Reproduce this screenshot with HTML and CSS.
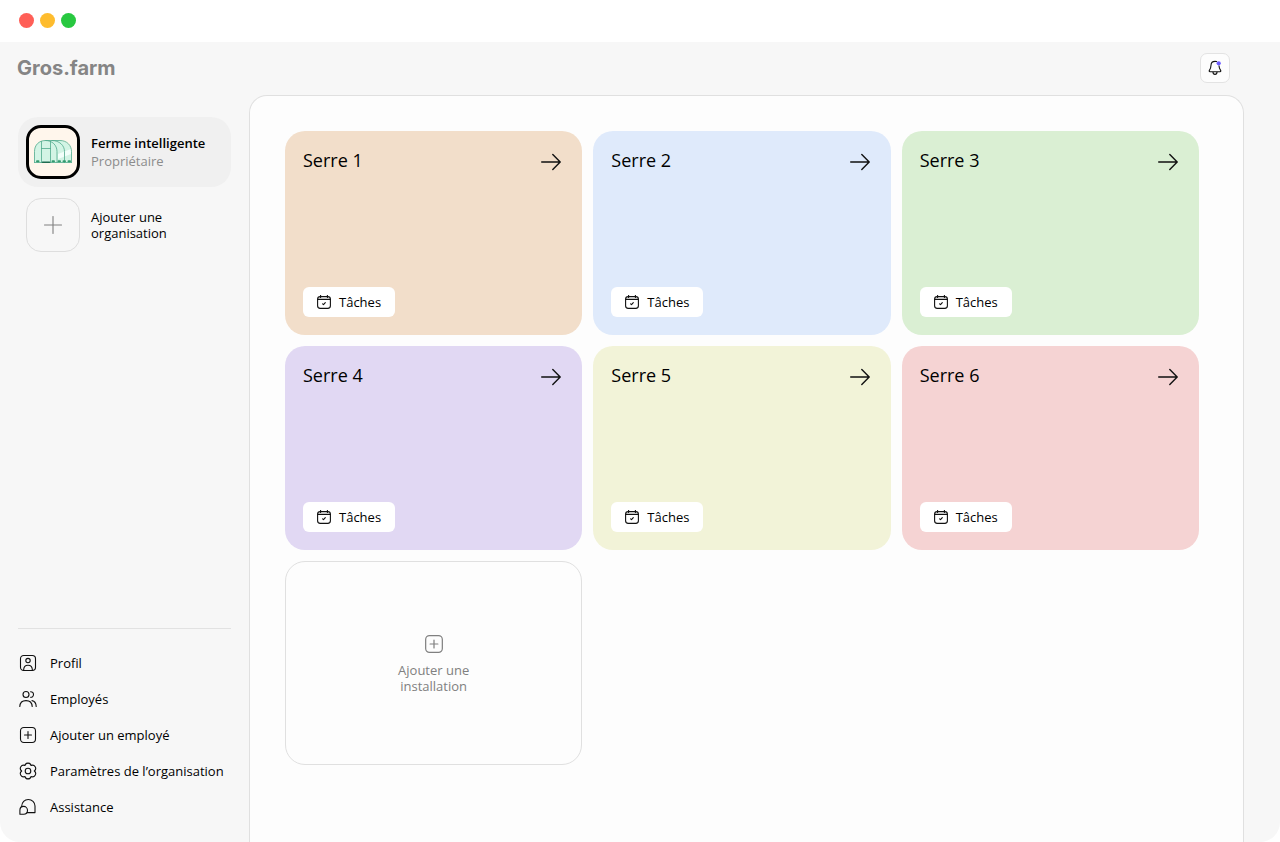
FILE: index.html
```html
<!DOCTYPE html>
<html lang="fr">
<head>
    <meta charset="UTF-8">
    <meta name="viewport" content="width=device-width, initial-scale=1.0">
    <title>Gros.farm - Ferme intelligente</title>
    <link rel="stylesheet" href="styles.css">
</head>
<body>

<!-- Icônes partagées -->
<svg class="sprite" aria-hidden="true">
    <symbol id="icon-arrow" viewBox="0 0 20 18">
        <path d="M0.7 9H19M11.8 1.5L19.2 9L11.8 16.5"/>
    </symbol>
    <symbol id="icon-calendar" viewBox="0 0 14 14">
        <rect x="0.6" y="1.6" width="12.8" height="11.8" rx="2.6"/>
        <path d="M0.6 4.4H13.4M3.6 0.3V2.4M10.4 0.3V2.4M5.6 8.9L6.5 9.6L8.3 7.6"/>
    </symbol>
    <symbol id="icon-plus-box" viewBox="0 0 18 18">
        <rect x="1.5" y="1.5" width="15" height="15" rx="3.4"/>
        <path d="M9 5.5V12.5M5.5 9H12.5"/>
    </symbol>
</svg>

<div class="titlebar">
    <span class="dot red"></span>
    <span class="dot yellow"></span>
    <span class="dot green"></span>
</div>

<div class="app">
    <header class="topbar">
        <a href="#" class="logo">Gros.farm</a>
        <button type="button" class="bell" aria-label="Notifications">
            <svg width="14" height="16" viewBox="0 0 14 16">
                <path d="M8.6 1.6C8.1 1.4 7.6 1.4 7 1.4C4.6 1.4 3.1 3.1 3 5.2C2.9 7.7 2.6 8.8 1.4 10.4C0.9 11.2 1.2 11.7 2 11.7H12C12.8 11.7 13.1 11.2 12.6 10.4C11.5 8.9 11.1 7.9 11 5.8M4.9 11.9C5 13.5 5.9 14.4 7 14.4C8.1 14.4 9 13.5 9.1 11.9"/>
                <circle cx="10.7" cy="3.3" r="2.1" class="badge"/>
            </svg>
        </button>
    </header>

    <div class="layout">
        <aside class="sidebar">
            <div class="orgs">
                <a href="#" class="org active">
                    <span class="avatar">
                        <svg width="40" height="26" viewBox="0 0 40 26">
                            <path class="glass" d="M1.5 23.5V11C2 5.5 6.5 1.5 12 1.5H27C33.5 2 38 6.5 38.5 12V23.5Z"/>
                            <path class="shine" d="M25 15L38 10V15L25 20Z"/>
                            <path class="frame" d="M1.5 23.5V12.5C1.5 6 6 1.5 12.5 1.5S24 6 24 12.5V23.5M12.5 1.5H27C34 1.5 38.5 6.5 38.5 12.5V23.5M19 1.5C26.5 1.5 31.5 6.5 31.5 12.5V23.5M8.5 2.5V23.5M17.5 2.5V23.5M8.5 9.5H17.5M1.5 23.5H38.5"/>
                            <path class="plants" d="M4 22.3H5.5M19.5 22.3H21M25.5 22.3H27M30.5 22.3H32M35.5 22.3H37"/>
                            <path class="step" d="M9.5 23.2H16.5"/>
                        </svg>
                    </span>
                    <span class="org-text">
                        <strong>Ferme intelligente</strong>
                        <small>Propriétaire</small>
                    </span>
                </a>
                <button type="button" class="org add-org">
                    <span class="avatar">
                        <svg width="18" height="18" viewBox="0 0 18 18"><path d="M9 0.5V17.5M0.5 9H17.5"/></svg>
                    </span>
                    <span class="org-text">Ajouter une<br>organisation</span>
                </button>
            </div>

            <nav class="menu">
                <a href="#">
                    <svg width="18" height="18" viewBox="0 0 18 18">
                        <rect x="1.5" y="1.5" width="15" height="15" rx="3.2"/>
                        <circle cx="9" cy="6.6" r="2.2"/>
                        <path d="M4.6 16.2C4.7 13 6.2 11.3 9 11.3S13.3 13 13.4 16.2"/>
                    </svg>
                    Profil
                </a>
                <a href="#">
                    <svg width="18" height="18" viewBox="0 0 18 18">
                        <circle cx="7" cy="4.5" r="3"/>
                        <path d="M11.6 1.7C13.2 1.6 14.5 2.9 14.5 4.5S13.2 7.4 11.6 7.3M0.8 16.5C1 12.8 3.4 10.6 7 10.6S13 12.8 13.2 16.5M13 10.6C15.5 11.1 17.1 13.3 17.2 16.5"/>
                    </svg>
                    Employés
                </a>
                <a href="#">
                    <svg width="18" height="18"><use href="#icon-plus-box"/></svg>
                    Ajouter un employé
                </a>
                <a href="#">
                    <svg width="18" height="18" viewBox="0 0 18 18">
                        <circle cx="9" cy="9" r="2.8"/>
                        <path d="M5.9 3.5A3.2 3.2 0 0 1 12.1 3.5A3.2 3.2 0 0 1 15.3 9A3.2 3.2 0 0 1 12.1 14.5A3.2 3.2 0 0 1 5.9 14.5A3.2 3.2 0 0 1 2.7 9A3.2 3.2 0 0 1 5.9 3.5Z"/>
                    </svg>
                    Paramètres de l’organisation
                </a>
                <a href="#">
                    <svg width="18" height="18" viewBox="0 0 18 18">
                        <path d="M2.6 8.6C2.8 4.4 5.6 1.5 9.3 1.5C13 1.5 16 4.3 16 8.1V14.6H8.3"/>
                        <path d="M0.9 16.3V12.3C0.9 9.9 2.4 8.4 4.6 8.4S8.5 10.1 8.5 12.3S6.9 16.3 4.6 16.3Z"/>
                    </svg>
                    Assistance
                </a>
            </nav>
        </aside>

        <main class="panel">
            <section class="card orange">
                <div class="card-head">
                    <h2>Serre 1</h2>
                    <a href="#" aria-label="Ouvrir Serre 1"><svg width="20" height="18"><use href="#icon-arrow"/></svg></a>
                </div>
                <button type="button" class="tasks"><svg width="14" height="14"><use href="#icon-calendar"/></svg>Tâches</button>
            </section>
            <section class="card blue">
                <div class="card-head">
                    <h2>Serre 2</h2>
                    <a href="#" aria-label="Ouvrir Serre 2"><svg width="20" height="18"><use href="#icon-arrow"/></svg></a>
                </div>
                <button type="button" class="tasks"><svg width="14" height="14"><use href="#icon-calendar"/></svg>Tâches</button>
            </section>
            <section class="card mint">
                <div class="card-head">
                    <h2>Serre 3</h2>
                    <a href="#" aria-label="Ouvrir Serre 3"><svg width="20" height="18"><use href="#icon-arrow"/></svg></a>
                </div>
                <button type="button" class="tasks"><svg width="14" height="14"><use href="#icon-calendar"/></svg>Tâches</button>
            </section>
            <section class="card purple">
                <div class="card-head">
                    <h2>Serre 4</h2>
                    <a href="#" aria-label="Ouvrir Serre 4"><svg width="20" height="18"><use href="#icon-arrow"/></svg></a>
                </div>
                <button type="button" class="tasks"><svg width="14" height="14"><use href="#icon-calendar"/></svg>Tâches</button>
            </section>
            <section class="card lime">
                <div class="card-head">
                    <h2>Serre 5</h2>
                    <a href="#" aria-label="Ouvrir Serre 5"><svg width="20" height="18"><use href="#icon-arrow"/></svg></a>
                </div>
                <button type="button" class="tasks"><svg width="14" height="14"><use href="#icon-calendar"/></svg>Tâches</button>
            </section>
            <section class="card pink">
                <div class="card-head">
                    <h2>Serre 6</h2>
                    <a href="#" aria-label="Ouvrir Serre 6"><svg width="20" height="18"><use href="#icon-arrow"/></svg></a>
                </div>
                <button type="button" class="tasks"><svg width="14" height="14"><use href="#icon-calendar"/></svg>Tâches</button>
            </section>
            <button type="button" class="card add-card">
                <svg width="20" height="20"><use href="#icon-plus-box"/></svg>
                <span>Ajouter une<br>installation</span>
            </button>
        </main>
    </div>
</div>

</body>
</html>
```

FILE: styles.css
```css
* {
    box-sizing: border-box;
}
body {
    font-family: "Open Sans", "Noto Sans", sans-serif;
    font-size: 13px;
    line-height: 16px;
    margin: 0;
    min-height: 100vh;
    display: flex;
    flex-direction: column;
    background: #fff;
    color: #000;
}
a {
    color: inherit;
    text-decoration: none;
}
button {
    font: inherit;
    color: inherit;
    border: none;
    background: none;
    padding: 0;
    cursor: pointer;
}
svg {
    display: block;
    flex-shrink: 0;
    fill: none;
    stroke: #111;
    stroke-width: 1.1;
    stroke-linecap: round;
    stroke-linejoin: round;
}
.sprite {
    position: absolute;
    width: 0;
    height: 0;
}

/* window bar */
.titlebar {
    height: 42px;
    padding: 0 19px 2px;
    display: flex;
    align-items: center;
    gap: 6px;
}
.dot {
    width: 15px;
    height: 15px;
    border-radius: 50%;
}
.red {
    background: #ff5f57;
}
.yellow {
    background: #febc2e;
}
.green {
    background: #28c840;
}

.app {
    flex: 1;
    display: flex;
    flex-direction: column;
    background: #f7f7f7;
    border-radius: 0 0 20px 20px;
}
.topbar {
    height: 53px;
    padding: 0 50px 2px 17px;
    display: flex;
    align-items: center;
    justify-content: space-between;
}
.logo {
    font-family: Inter, sans-serif;
    font-size: 20px;
    font-weight: 700;
    color: #858585;
}
.bell {
    width: 30px;
    height: 30px;
    display: flex;
    align-items: center;
    justify-content: center;
    background: #fdfdfd;
    border: 1px solid #e3e3e3;
    border-radius: 7px;
}
.bell .badge {
    fill: #6d5cff;
    stroke: none;
}
.layout {
    flex: 1;
    display: flex;
    padding-right: 36px;
}

/* sidebar */
.sidebar {
    width: 249px;
    flex-shrink: 0;
    padding: 22px 18px 17px;
    display: flex;
    flex-direction: column;
    justify-content: space-between;
}
.orgs {
    display: flex;
    flex-direction: column;
    gap: 3px;
}
.org {
    display: flex;
    align-items: center;
    gap: 11px;
    padding: 8px;
    border-radius: 20px;
    text-align: left;
}
.org.active {
    background: #f0f0f0;
}
.avatar {
    width: 54px;
    height: 54px;
    display: flex;
    align-items: center;
    justify-content: center;
    border: 1px solid #dedede;
    border-radius: 15px;
}
.active .avatar {
    background: #fff6ec;
    border: 3px solid #000;
}
.add-org .avatar svg {
    stroke: #808080;
}
.avatar .glass {
    fill: #d3f4e5;
    stroke: none;
}
.avatar .shine {
    fill: #f2fffa;
    stroke: none;
}
.avatar .frame {
    stroke: #4fa98b;
    stroke-width: 0.8;
}
.avatar .plants {
    stroke: #339a6e;
    stroke-width: 2;
}
.avatar .step {
    stroke: #1f6b50;
    stroke-width: 1.5;
}
.org-text {
    display: flex;
    flex-direction: column;
}
.add-org .org-text {
    display: block;
}
.org-text strong {
    font-weight: 600;
    line-height: 18px;
}
.org-text small {
    font-size: 13px;
    line-height: 18px;
    color: #8c8c8c;
}
.menu {
    border-top: 1px solid #e2e2e2;
    padding-top: 16px;
}
.menu a {
    display: flex;
    align-items: center;
    gap: 13px;
    height: 36px;
    padding-left: 1px;
    white-space: nowrap;
}

/* greenhouses */
.panel {
    flex: 1;
    display: grid;
    grid-template-columns: repeat(3, 1fr);
    grid-auto-rows: 204px;
    align-content: start;
    gap: 11px;
    padding: 35px 44px 35px 35px;
    background: #fdfdfd;
    border: 1px solid #e0e0e0;
    border-bottom: none;
    border-radius: 18px 18px 0 0;
}
.card {
    display: flex;
    flex-direction: column;
    justify-content: space-between;
    align-items: flex-start;
    padding: 18px;
    border-radius: 20px;
}
.card-head {
    width: 100%;
    display: flex;
    justify-content: space-between;
    align-items: flex-start;
    padding-right: 3px;
}
.card-head a {
    padding-top: 4px;
}
.card-head svg {
    stroke-width: 1.4;
}
.card h2 {
    margin: 0;
    font-size: 18px;
    font-weight: 400;
    line-height: 22px;
}
.tasks {
    display: flex;
    align-items: center;
    gap: 8px;
    height: 30px;
    padding: 0 14px;
    background: #fff;
    border-radius: 6px;
}
.orange {
    background: #f2deca;
}
.blue {
    background: #dfeafb;
}
.mint {
    background: #daefd3;
}
.purple {
    background: #e1d8f3;
}
.lime {
    background: #f2f3d8;
}
.pink {
    background: #f5d3d3;
}
.add-card {
    align-items: center;
    justify-content: center;
    gap: 8px;
    padding-top: 20px;
    border: 1px solid #e0e0e0;
    color: #808080;
}
.add-card svg {
    stroke: #808080;
}
```
